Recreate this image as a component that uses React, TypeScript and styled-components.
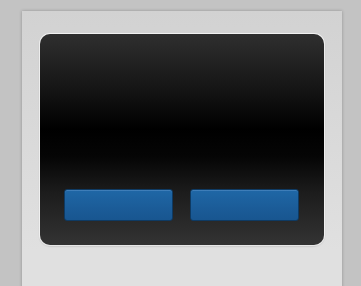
import React from "react";
import styled, { createGlobalStyle } from "styled-components";

const GlobalStyle = createGlobalStyle`
  html, body {
    margin: 0;
    padding: 0;
    background: #c3c3c3;
    font-family: "Liberation Sans", Arial, sans-serif;
  }
`;

const Page = styled.div`
  height: 286px;
  overflow: hidden;
  padding: 11px 0 0 22px;
  box-sizing: border-box;
`;

const Panel = styled.div`
  width: 320px;
  height: 300px;
  box-sizing: border-box;
  padding: 23px 18px 0 18px;
  background: linear-gradient(#d2d2d2, #e0e0e0 80%);
  box-shadow: 0 0 3px rgba(0, 0, 0, 0.25);
`;

const Screen = styled.div`
  height: 211px;
  box-sizing: border-box;
  border-radius: 10px;
  background: linear-gradient(
    #2f2f2f 0%,
    #161616 25%,
    #000 45%,
    #050505 58%,
    #1c1c1c 75%,
    #333 100%
  );
  box-shadow: 0 0 0 1px rgba(255, 255, 255, 0.7), 0 1px 2px rgba(0, 0, 0, 0.3);
  display: flex;
  align-items: flex-end;
  gap: 17px;
  padding: 0 25px 24px 24px;
`;

const Button = styled.button`
  width: 109px;
  height: 32px;
  border: 1px solid #0e3a63;
  border-radius: 3px;
  background: linear-gradient(#1f67a6, #1b5c98 60%, #185690);
  box-shadow: inset 0 1px 0 rgba(120, 170, 220, 0.35);
  padding: 0;
  cursor: pointer;
`;

const App: React.FC = () => {
  return (
    <Page>
      <GlobalStyle />
      <Panel>
        <Screen>
          <Button />
          <Button />
        </Screen>
      </Panel>
    </Page>
  );
};

export default App;
